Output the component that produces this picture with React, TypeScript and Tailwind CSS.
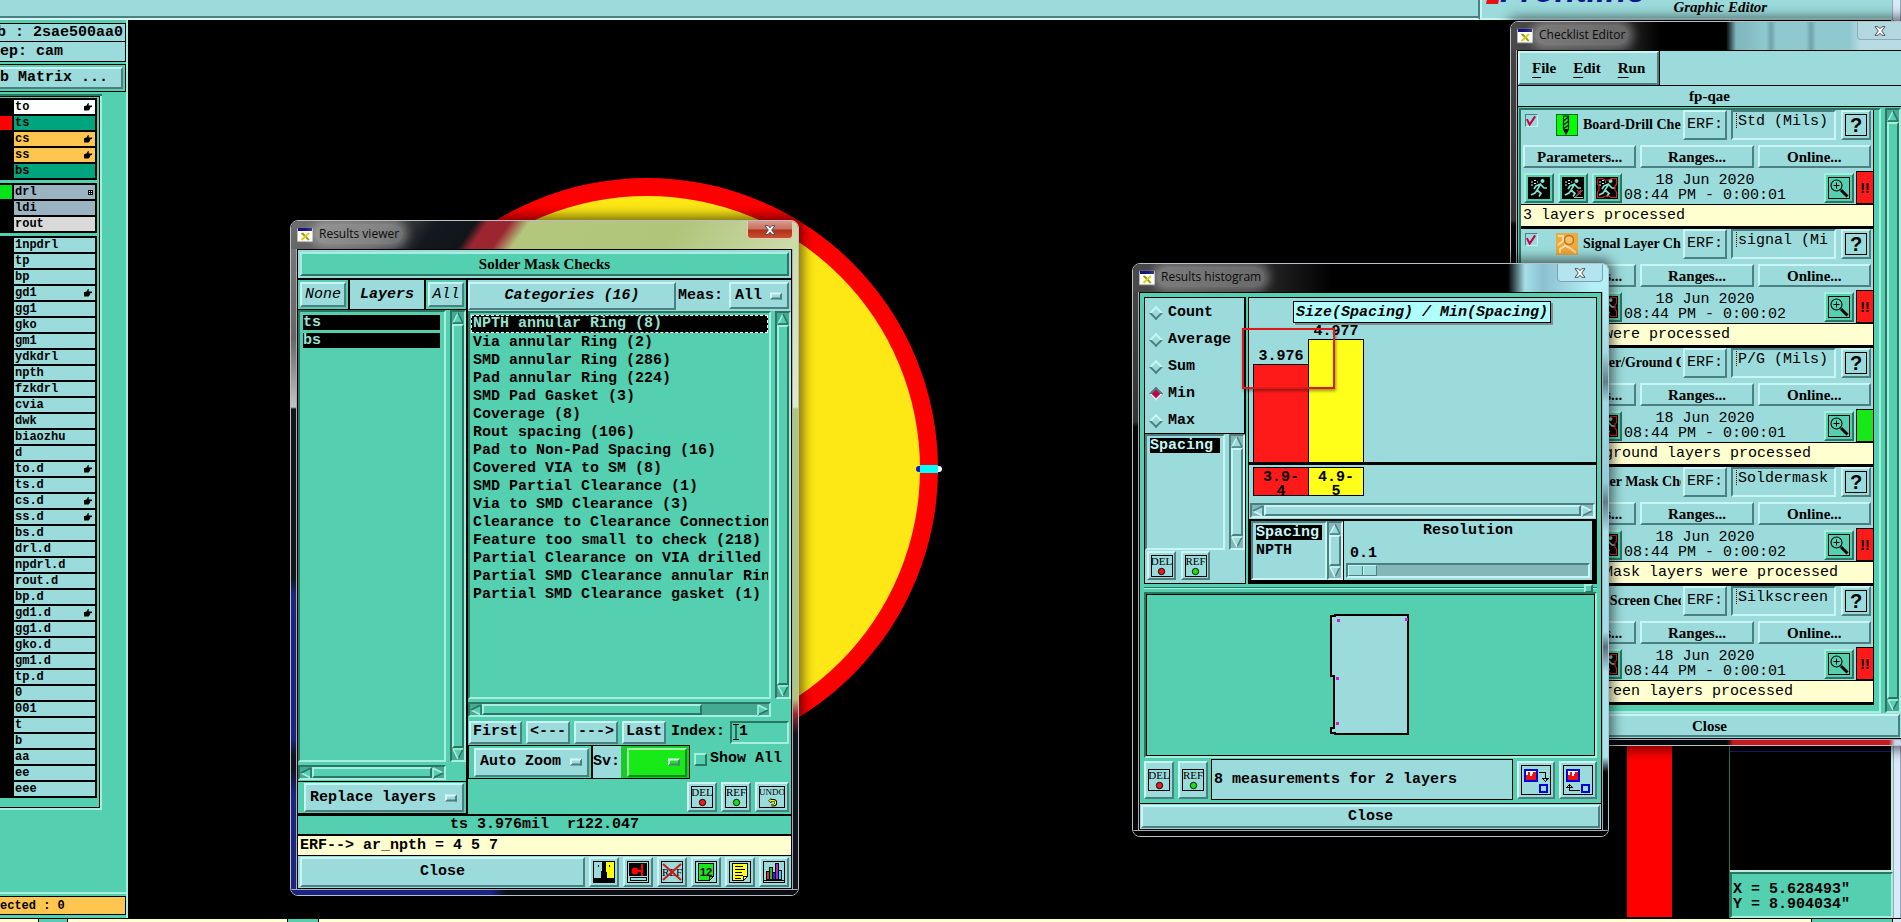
import React from 'react';

const CY = 'bg-[#9bdbdb]';
const TL = 'bg-[#54cfb0]';
const RAISED =
  'border-2 border-t-[#c9f5f4] border-l-[#c9f5f4] border-r-[#4c7f7f] border-b-[#4c7f7f]';
const SUNK =
  'border-2 border-t-[#4c7f7f] border-l-[#4c7f7f] border-r-[#c9f5f4] border-b-[#c9f5f4]';
const RAISED_T =
  'border-2 border-t-[#a6eedd] border-l-[#a6eedd] border-r-[#2b7562] border-b-[#2b7562]';
const SUNK_T =
  'border-2 border-t-[#2b7562] border-l-[#2b7562] border-r-[#a6eedd] border-b-[#a6eedd]';
const SERIF = "font-['Liberation_Serif',serif]";

/* ---------- shared widgets ---------- */

function Arrow({ dir, teal }: { dir: 'up' | 'down' | 'left' | 'right'; teal?: boolean }) {
  const rot = { up: 0, right: 90, down: 180, left: 270 }[dir];
  const light = teal ? '#a6eedd' : '#c9f5f4';
  const dark = teal ? '#2b7562' : '#4c7f7f';
  const lit = dir === 'up' || dir === 'left';
  return (
    <svg width="12" height="12" viewBox="0 0 12 12" className="shrink-0" aria-hidden="true">
      <g transform={`rotate(${rot} 6 6)`}>
        <path d="M6 1 L11 11 L1 11 Z" fill={teal ? '#54cfb0' : '#9bdbdb'} />
        <path d="M6 1 L1 11" stroke={dir === 'down' ? dark : light} strokeWidth="1.6" />
        <path d="M6 1 L11 11" stroke={dir === 'down' ? light : dark} strokeWidth="1.6" />
        <path d="M1 11 L11 11" stroke={lit ? dark : light} strokeWidth="1.6" />
      </g>
    </svg>
  );
}

function VScroll({ teal }: { teal?: boolean }) {
  return (
    <div
      className={`flex w-4 shrink-0 flex-col items-center ${
        teal ? `bg-[#46a991] ${SUNK_T}` : `bg-[#84b8b8] ${SUNK}`
      }`}
    >
      <Arrow dir="up" teal={teal} />
      <div className={`w-full flex-1 ${teal ? `${TL} ${RAISED_T}` : `${CY} ${RAISED}`}`} />
      <Arrow dir="down" teal={teal} />
    </div>
  );
}

function HScroll({ teal, rest = '' }: { teal?: boolean; rest?: string }) {
  return (
    <div
      className={`flex h-[15px] items-center ${
        teal ? `bg-[#46a991] ${SUNK_T}` : `bg-[#84b8b8] ${SUNK}`
      }`}
    >
      <Arrow dir="left" teal={teal} />
      <div className={`h-full flex-1 ${teal ? `${TL} ${RAISED_T}` : `${CY} ${RAISED}`}`} />
      <div className={rest} />
      <Arrow dir="right" teal={teal} />
    </div>
  );
}

function Btn({
  children,
  className = '',
  label,
}: {
  children: React.ReactNode;
  className?: string;
  label?: string;
}) {
  return (
    <button
      type="button"
      aria-label={label}
      className={`flex shrink-0 items-center justify-center whitespace-nowrap ${CY} ${RAISED} ${className}`}
    >
      {children}
    </button>
  );
}

function OptionMenu({
  label,
  value,
  className = '',
  face = `${CY} ${RAISED}`,
  knob = 'bg-[#9bdbdb]',
}: {
  label: string;
  value: string;
  className?: string;
  face?: string;
  knob?: string;
}) {
  return (
    <div className={`relative shrink-0 ${className}`}>
      <select
        aria-label={label}
        defaultValue={value}
        className={`h-full w-full appearance-none rounded-none pl-1 font-bold outline-none ${face}`}
      >
        <option>{value}</option>
      </select>
      <span
        className={`pointer-events-none absolute top-1/2 right-[7px] h-[7px] w-3 -translate-y-1/2 border-2 border-t-[#d6f8f6] border-l-[#d6f8f6] border-r-[#4c7f7f] border-b-[#4c7f7f] ${knob}`}
      />
    </div>
  );
}

function XLogo() {
  return (
    <svg width="16" height="16" viewBox="0 0 16 16" aria-hidden="true">
      <rect x="0" y="1" width="16" height="14" fill="#fff" stroke="#777" />
      <rect x="1" y="1" width="14" height="3" fill="#14147c" />
      <path d="M4.500 6 L11.500 13 M5.500 6 L12 13" stroke="#9a9400" strokeWidth="1.400" />
      <path d="M12 6 L4.500 13" stroke="#d9cf10" strokeWidth="2" />
    </svg>
  );
}

function Win({
  title,
  place,
  titleBg,
  left,
  right,
  bottom,
  closeBg,
  round = 'rounded-lg',
  children,
}: {
  title: string;
  place: string;
  titleBg: string;
  left: string;
  right: string;
  bottom: string;
  closeBg: string;
  round?: string;
  children: React.ReactNode;
}) {
  return (
    <section
      aria-label={title}
      className={`absolute flex flex-col overflow-hidden border border-[#b9bfc6] shadow-[0_0_12px_4px_rgba(0,0,0,0.55)] ${round} ${place}`}
    >
      <header className={`flex h-7 shrink-0 items-start pl-[6px] ${titleBg}`}>
        <span className="mt-[6px]">
          <XLogo />
        </span>
        <h2 className="mt-[3px] ml-[2px] rounded-full bg-white/30 px-1 font-['Open_Sans',sans-serif] text-[12px] leading-5 font-normal text-[#0c0c0c] shadow-[0_0_8px_5px_rgba(255,255,255,0.3)]">
          {title}
        </h2>
        <span className="flex-1" />
        <button
          type="button"
          aria-label={`Close ${title}`}
          className={`mr-[5px] flex h-[18px] w-[46px] items-center justify-center rounded-b-[4px] border border-t-0 ${closeBg}`}
        >
          <svg width="12" height="10" viewBox="0 0 12 10" aria-hidden="true">
            <path
              d="M1 .7h3.200L6 2.800 7.800.7H11L7.700 5 11 9.300H7.800L6 7.200 4.200 9.300H1L4.300 5Z"
              fill="#fff"
              stroke="#4b4f56"
              strokeWidth="1"
            />
          </svg>
        </button>
      </header>
      <div className="flex min-h-0 flex-1">
        <div className={`w-[6px] shrink-0 border-r border-[#aab] ${left}`} />
        <div className="flex min-w-0 flex-1 flex-col border border-black">{children}</div>
        <div className={`w-[6px] shrink-0 border-l border-[#aab] ${right}`} />
      </div>
      <div className={`h-[6px] shrink-0 border-t border-[#aab] ${bottom}`} />
    </section>
  );
}

/* ---------- small icons ---------- */

function TagIcon({ text, color }: { text: string; color?: string }) {
  return (
    <span
      className={`flex h-[22px] flex-col items-center border border-black ${color ? 'w-[22px]' : 'w-[26px]'}`}
    >
      <span
        className={`font-normal ${SERIF} ${
          color ? 'text-[11px] leading-[11px]' : 'text-[9px] leading-[11px]'
        }`}
      >
        {text}
      </span>
      {color ? (
        <svg width="9" height="9" viewBox="0 0 9 9" aria-hidden="true">
          <circle cx="4.500" cy="4.500" r="3.200" fill={color} stroke="#000" strokeWidth=".9" />
        </svg>
      ) : (
        <svg width="11" height="10" viewBox="0 0 11 10" aria-hidden="true">
          <path d="M3 2.500h3.500a2.400 2.400 0 0 1 0 5.500H4.500" fill="none" stroke="#000" strokeWidth="2.800" />
          <path d="M1 3 4 .5v5Z" fill="#ff0" stroke="#000" strokeWidth=".7" />
          <path d="M3 2.700h3.500a2.200 2.200 0 0 1 0 5H5" fill="none" stroke="#ff0" strokeWidth="1.200" />
        </svg>
      )}
    </span>
  );
}

function Icon({ children }: { children: React.ReactNode }) {
  return (
    <svg width="22" height="22" viewBox="0 0 22 22" shapeRendering="crispEdges" aria-hidden="true">
      {children}
    </svg>
  );
}

const Frame = () => <rect x=".5" y=".5" width="21" height="21" fill="none" stroke="#000" />;

function HideIcon() {
  return (
    <Icon>
      <rect width="11" height="22" fill="#9bdbdb" />
      <rect x="11" width="11" height="22" fill="#ff0" />
      <path d="M9 1h4v8l1 3v5h7v4H1v-4h7v-5l1-3Z" fill="#000" />
      <rect x="5" y="4" width="1" height="2" />
      <rect x="16" y="4" width="1" height="2" />
      <Frame />
    </Icon>
  );
}
function TargetIcon() {
  return (
    <Icon>
      <rect x="2" y="2" width="18" height="13" fill="#000" />
      <circle cx="8" cy="10" r="3.500" fill="#f00" shapeRendering="auto" />
      <path d="M11 10h3M15 3v12" stroke="#f00" strokeWidth="2" />
      <path d="M3 16.500h16v3H3Z" fill="#9bdbdb" stroke="#000" />
      <Frame />
    </Icon>
  );
}
function NoRefIcon() {
  return (
    <span className="relative flex h-[22px] w-[22px] items-center justify-center border border-black">
      <span className={`text-[11px] leading-3 font-normal ${SERIF}`}>REF</span>
      <svg className="absolute inset-0" width="20" height="20" viewBox="0 0 20 20" aria-hidden="true">
        <path d="M1 2 19 18M19 2 1 18" stroke="#d01818" strokeWidth="2" />
      </svg>
    </span>
  );
}
function PageIcon({ fill, lines }: { fill: string; lines?: boolean }) {
  return (
    <span className="relative flex h-[22px] w-[22px] items-center justify-center">
      <span className="absolute inset-0">
        <Icon>
          <path d="M3.500 2.500h15v13l-4 4h-11Z" fill={fill} stroke="#000" />
          <path d="M14.500 19.500v-4h4" fill="none" stroke="#000" />
          {lines && <path d="M6 5.500h8M6 8.500h10M6 11.500h7M6 14.500h8M6 17h6" stroke="#000" />}
          <Frame />
        </Icon>
      </span>
      {!lines && <span className="relative font-['Liberation_Sans',sans-serif] text-[11px] leading-3 font-bold">12</span>}
    </span>
  );
}
function ChartIcon() {
  return (
    <Icon>
      <path d="M1 19.500h20" stroke="#000" />
      <rect x="3.500" y="10.500" width="3" height="8" fill="#f22" stroke="#000" />
      <rect x="6.500" y="6.500" width="3" height="12" fill="#2b2" stroke="#000" />
      <rect x="9.500" y="11.500" width="3" height="7" fill="#22f" stroke="#000" />
      <rect x="12.500" y="2.500" width="3" height="16" fill="#b2b" stroke="#000" />
      <rect x="15.500" y="9.500" width="3" height="9" fill="#2df" stroke="#000" />
      <Frame />
    </Icon>
  );
}
function SwapIcon({ up }: { up?: boolean }) {
  return (
    <svg width="30" height="30" viewBox="0 0 30 30" shapeRendering="crispEdges" aria-hidden="true">
      <rect x=".5" y=".5" width="29" height="29" fill="none" stroke="#000" />
      <rect x="4" y="5" width="12" height="11" fill="#fff" stroke="#00d" strokeWidth="2" />
      <path d="M5 15V10h2V7h2v4h2V9h1V7h3v8Z" fill="#e11" />
      <rect x="19" y="20" width="7" height="7" fill="none" stroke="#00d" strokeWidth="2" />
      {up ? (
        <path d="M17 25.500H6.500V20M4 22.500l2.500-3 2.500 3Z" fill="none" stroke="#000" />
      ) : (
        <path d="M18 7.500h6.500V14M22 13.500l2.500 3 2.500-3Z" fill="none" stroke="#000" />
      )}
    </svg>
  );
}
function RunIcon({ kind }: { kind: number }) {
  return (
    <svg width="22" height="22" viewBox="0 0 22 22" aria-hidden="true">
      <rect width="22" height="22" fill="#000" />
      <circle cx="14.500" cy="4" r="2" fill="#7fe3cd" />
      <path
        d="M13 6.500 9 13l4 3.500-2 3M9.500 12.500 7 16l-4 2M12.500 7 8 9l-2 3M13 8l3 3h3"
        fill="none"
        stroke="#7fe3cd"
        strokeWidth="1.700"
      />
      <path d="M3 5h2M6 3.500h2M3 8h2M6 6.500h2M9 5h1" stroke="#bff" strokeWidth="1" />
      {kind === 1 && (
        <>
          <path d="M13 20.500 20.500 13M12 20.500h9" stroke="#9dd" strokeWidth=".9" />
          <path d="m15 13 4 5m0-5-4 5" stroke="#d22" strokeWidth="1.200" />
        </>
      )}
      {kind === 2 && (
        <path
          d="M2 1.500h5l2 1.500h4l2-1.500h5.500v6L19 9v4l1.500 2v5.500H15L13 19H9l-2 1.500H1.500V15L3 13V9L1.500 7Z"
          fill="none"
          stroke="#e01c1c"
          strokeWidth="1.200"
        />
      )}
    </svg>
  );
}
function ZoomIcon() {
  return (
    <svg width="22" height="22" viewBox="0 0 22 22" aria-hidden="true">
      <rect x=".5" y=".5" width="21" height="21" fill="#54cfb0" stroke="#000" />
      <circle cx="8.500" cy="8.500" r="5.500" fill="none" stroke="#000" strokeWidth="1.100" />
      <path d="M5.500 8.500h6M8.500 5.500v6" stroke="#000" />
      <path d="m13 13 6.500 6.500" stroke="#000" strokeWidth="3" />
    </svg>
  );
}
function DrillIcon() {
  return (
    <svg width="22" height="22" viewBox="0 0 22 22" aria-hidden="true">
      <rect x=".5" y=".5" width="21" height="21" fill="#0f0" stroke="#062" />
      <path d="M7.500 2h5v13l-2.500 5-2.500-5ZM7.500 7l5-4M7.500 11l5-4M7.500 15l5-4" fill="none" stroke="#000" strokeWidth="1.200" />
      <path d="M8 15h4l-2 5Z" />
    </svg>
  );
}
function SignalIcon() {
  return (
    <svg width="22" height="22" viewBox="0 0 22 22" aria-hidden="true">
      <rect width="22" height="22" fill="#f0a93c" />
      <circle cx="13" cy="7" r="4.500" fill="#f7c069" stroke="#b87816" strokeWidth="1.500" />
      <path d="M2 3h5v5L2 12M8 12l6 3 6 5M4 20v-4l5-3" fill="none" stroke="#f9dca0" strokeWidth="2" />
    </svg>
  );
}
function Hand() {
  return (
    <svg width="9" height="8" viewBox="0 0 9 8" aria-hidden="true">
      <path d="M0 3.500 3 2.500 4.500 0 5.500.6 5 2.500H8.500V4L6.500 4.500V6L5 7.500H1L0 7Z" transform="translate(-.5)" />
    </svg>
  );
}

/* ---------- layer list ---------- */

type Layer = { name: string; bg?: string; mark?: 'hand' | 'grid'; swatch?: string };
const G1: Layer[] = [
  { name: 'to', bg: 'bg-white', mark: 'hand' },
  { name: 'ts', bg: 'bg-[#00a57e]', swatch: 'bg-[#ff0000]' },
  { name: 'cs', bg: 'bg-[#ffc64f]', mark: 'hand' },
  { name: 'ss', bg: 'bg-[#ffc64f]', mark: 'hand' },
  { name: 'bs', bg: 'bg-[#00a57e]' },
];
const G2: Layer[] = [
  { name: 'drl', bg: 'bg-[#9ab5c1]', mark: 'grid', swatch: 'bg-[#00e51a]' },
  { name: 'ldi', bg: 'bg-[#9ab5c1]' },
  { name: 'rout', bg: 'bg-[#d9d9d9]' },
];
const HANDS = ['gd1', 'to.d', 'cs.d', 'ss.d', 'gd1.d'];
const G3: Layer[] = (
  '1npdrl tp bp gd1 gg1 gko gm1 ydkdrl npth fzkdrl cvia dwk biaozhu d to.d ts.d cs.d ss.d bs.d drl.d npdrl.d ' +
  'rout.d bp.d gd1.d gg1.d gko.d gm1.d tp.d 0 001 t b aa ee eee'
)
  .split(' ')
  .map((name) => ({ name, mark: HANDS.includes(name) ? ('hand' as const) : undefined }));

function LayerGroup({ rows }: { rows: Layer[] }) {
  return (
    <ul className="flex flex-col gap-[2px] bg-black py-[2px] pr-[2px]">
      {rows.map((r) => (
        <li key={r.name} className="flex h-[14px] gap-[2px]">
          <span className={`w-3 ${r.swatch ?? 'bg-black'}`} />
          <span
            className={`flex flex-1 items-center justify-between pr-[2px] pl-[1px] text-[12px] leading-[14px] ${
              r.bg ?? CY
            }`}
          >
            {r.name}
            {r.mark === 'hand' && <Hand />}
            {r.mark === 'grid' && (
              <svg width="5" height="5" viewBox="0 0 5 5" shapeRendering="crispEdges" aria-hidden="true">
                <rect width="5" height="5" />
                <path d="M1 1h1v1H1ZM3 1h1v1H3ZM1 3h1v1H1ZM3 3h1v1H3Z" fill="#fff" />
              </svg>
            )}
          </span>
        </li>
      ))}
    </ul>
  );
}

function Sidebar() {
  return (
    <aside className={`flex w-32 shrink-0 flex-col overflow-hidden border-r-2 border-[#a6eedd] pt-[3px] ${TL}`}>
      <div className="border border-l-0 border-black">
        <div className={`flex h-[18px] items-center justify-end border-b border-black pr-[2px] leading-[18px] whitespace-pre ${CY}`}>
          b : 2sae500aa0
        </div>
        <div className={`flex h-[19px] items-center leading-[19px] ${CY}`}>ep: cam</div>
      </div>
      <div className="mt-[2px] border border-l-0 border-black py-[2px] pr-[2px]">
        <Btn className="h-[22px] w-full justify-start border-l-0">b Matrix ...</Btn>
      </div>
      <div className="mt-[2px] mr-6 h-[2px] bg-[#2b7562]" />
      <div className="mr-6 border-r-2 border-b-2 border-[#a6eedd]">
        <div className="flex flex-col gap-[3px] border-t border-r border-b border-black pt-[1px] pr-[2px] pb-[9px]">
          <LayerGroup rows={G1} />
          <LayerGroup rows={G2} />
          <LayerGroup rows={G3} />
        </div>
      </div>
      <div className="flex-1" />
      <div className="border-t-2 border-[#a6eedd] pt-[2px] pb-[3px]">
        <div className="flex h-[19px] items-center border border-l-0 border-black bg-[#ffc64f] text-[12px]">
          ected : 0
        </div>
      </div>
    </aside>
  );
}

/* ---------- results viewer ---------- */

const CATS = [
  'NPTH annular Ring (8)',
  'Via annular Ring (2)',
  'SMD annular Ring (286)',
  'Pad annular Ring (224)',
  'SMD Pad Gasket (3)',
  'Coverage (8)',
  'Rout spacing (106)',
  'Pad to Non-Pad Spacing (16)',
  'Covered VIA to SM (8)',
  'SMD Partial Clearance (1)',
  'Via to SMD Clearance (3)',
  'Clearance to Clearance Connection (2)',
  'Feature too small to check (218)',
  'Partial Clearance on VIA drilled (4)',
  'Partial SMD Clearance annular Ring (1)',
  'Partial SMD Clearance gasket (1)',
];

function ResultsViewer() {
  return (
    <Win
      title="Results viewer"
      place="left-[290px] top-[220px] h-[676px] w-[509px]"
      titleBg="bg-[linear-gradient(125deg,#6e6e6e_0px,#4e4e4e_80px,#14191f_120px,#10151a_152px,#9c2630_162px,#9c2630_180px,#b2c67c_196px,#b0c47a_320px,#cddcac_430px)]"
      left="bg-[linear-gradient(#777,#666_90px,#c4c4c4_158px,#12161c_160px,#12161c_330px,#1a2482_345px,#1a2482_490px,#101420_505px,#101420_520px,#1a2482_545px)]"
      right="bg-[linear-gradient(#cddcac,#dfe8cc_158px,#b0c47a_160px,#b0c47a_450px,#9c2630_465px,#12161c_485px)]"
      bottom="bg-[linear-gradient(90deg,#1a2482_200px,#0c0e14_215px)]"
      closeBg="border-[#f0c4b4] bg-[linear-gradient(#dc9a88,#c87060_48%,#b03018_52%,#c85030)]"
    >
      <div className={`flex h-[30px] shrink-0 border-b-2 border-black p-[2px] ${CY}`}>
        <div className={`flex flex-1 items-center justify-center text-[15px] ${SERIF} ${TL} ${RAISED_T}`}>
          Solder Mask Checks
        </div>
      </div>
      <div className="flex min-h-0 flex-1">
        <div className={`flex w-[170px] shrink-0 flex-col border-r-2 border-black ${TL}`}>
          <div className="flex h-[30px] shrink-0 border-b border-black">
            <div className="p-[2px]">
              <Btn className="h-[25px] w-[46px] font-normal italic">None</Btn>
            </div>
            <div className={`flex flex-1 items-center justify-center border-x-2 border-black italic ${CY}`}>Layers</div>
            <div className="p-[2px]">
              <Btn className="h-[25px] w-9 font-normal italic">All</Btn>
            </div>
          </div>
          <div className="flex min-h-0 flex-1 gap-1">
            <ul className={`flex flex-1 flex-col gap-[3px] pt-[3px] pr-1 pl-[3px] ${SUNK_T}`}>
              {['ts', 'bs'].map((l) => (
                <li key={l} className="h-[15px] bg-black leading-[15px] text-[#9be0d0]">
                  {l}
                </li>
              ))}
            </ul>
            <VScroll teal />
          </div>
          <div className="mt-[3px] mr-5">
            <HScroll teal />
          </div>
          <div className="mt-px border-y border-black py-[1px] pr-[2px] pl-[6px]">
            <OptionMenu label="Layer mode" value="Replace layers" className="h-[29px] w-full" />
          </div>
        </div>
        <div className={`flex min-w-0 flex-1 flex-col ${TL}`}>
          <div className={`flex h-[31px] shrink-0 items-center gap-[2px] ${CY}`}>
            <Btn className="h-[28px] flex-1 italic">Categories (16)</Btn>
            <span className="pr-1">Meas:</span>
            <OptionMenu label="Measurement" value="All" className="mr-[2px] h-[27px] w-[60px]" />
          </div>
          <div className="flex min-h-0 flex-1 gap-1">
            <ul className={`flex-1 overflow-hidden pt-[2px] pr-[1px] pl-[1px] ${SUNK_T}`}>
              {CATS.map((c, i) => (
                <li
                  key={c}
                  className={
                    i === 0
                      ? 'mb-px h-[18px] border border-dashed border-white bg-black pl-px leading-4 text-[#9be0d0]'
                      : 'h-[18px] overflow-hidden pl-[2px] leading-[18px] whitespace-nowrap'
                  }
                >
                  {c}
                </li>
              ))}
            </ul>
            <VScroll teal />
          </div>
          <div className="mt-[3px] mr-5">
            <HScroll teal rest="w-[55px]" />
          </div>
          <div className="mt-[3px] flex h-6 shrink-0 items-center gap-1 pr-[2px] pl-[1px]">
            <Btn className="h-[23px] w-[53px]">First</Btn>
            <Btn className="h-[23px] w-11">&lt;---</Btn>
            <Btn className="h-[23px] w-11">---&gt;</Btn>
            <Btn className="h-[23px] w-11">Last</Btn>
            <label htmlFor="idx" className="flex-1 pl-px">
              Index:
            </label>
            <span className={`flex h-[23px] w-[59px] items-center ${SUNK_T}`}>
              <svg width="6" height="16" viewBox="0 0 6 16" className="ml-px" aria-hidden="true">
                <path d="M0 .5h6M0 15.500h6M3 0v16" stroke="#000" />
              </svg>
              <input id="idx" defaultValue="1" className="w-10 bg-transparent leading-4 font-bold outline-none" />
            </span>
          </div>
          <div className="mt-px flex h-[34px] shrink-0 items-start">
            <div className={`flex h-[34px] items-center border border-black ${TL}`}>
              <OptionMenu label="Zoom mode" value="Auto Zoom" className="mx-[2px] ml-[5px] h-[29px] w-[115px]" />
              <span className={`flex h-full items-center border-l-2 border-black pr-[1px] ${CY}`}>Sv:</span>
              <span className="flex h-full items-center bg-[#1cc92c] pr-[2px] pl-[6px]">
                <OptionMenu
                  label="Severity"
                  value=" "
                  className="h-[29px] w-[60px]"
                  face="border-2 border-t-[#a0f8a0] border-l-[#a0f8a0] border-r-[#148a20] border-b-[#148a20] bg-[#18ea18]"
                  knob="bg-[#18ea18]"
                />
              </span>
            </div>
            <label className="mt-[6px] ml-1 flex items-center gap-[3px]">
              <input type="checkbox" className={`h-[13px] w-[13px] appearance-none ${TL} ${RAISED_T}`} />
              <span className="leading-4">Show All</span>
            </label>
          </div>
          <div className="flex h-[35px] shrink-0 items-center justify-end gap-1 pr-[2px]">
            <Btn className="h-[30px] w-[30px]">
              <TagIcon text="DEL" color="#f01818" />
            </Btn>
            <Btn className="h-[30px] w-[30px]">
              <TagIcon text="REF" color="#18e018" />
            </Btn>
            <Btn className="h-[30px] w-[34px]">
              <TagIcon text="UNDO" />
            </Btn>
          </div>
        </div>
      </div>
      <div
        className={`flex h-[22px] shrink-0 items-center justify-center border-y-2 border-black whitespace-pre ${TL}`}
      >
        {'ts 3.976mil  r122.047'}
      </div>
      <div className="flex h-5 shrink-0 items-center border-b border-black bg-[#ffffcf] pl-[2px]">
        ERF--&gt; ar_npth = 4 5 7
      </div>
      <div className={`flex h-8 shrink-0 items-center gap-1 px-[2px] ${CY}`}>
        <Btn className="h-[30px] flex-1">Close</Btn>
        {[
          <HideIcon key="a" />,
          <TargetIcon key="b" />,
          <NoRefIcon key="c" />,
          <PageIcon key="d" fill="#18e818" />,
          <PageIcon key="e" fill="#ffff20" lines />,
          <ChartIcon key="f" />,
        ].map((ic, i) => (
          <Btn key={i} label={`Tool ${i + 1}`} className="h-[30px] w-[30px]">
            {ic}
          </Btn>
        ))}
      </div>
    </Win>
  );
}

/* ---------- histogram ---------- */

function Histogram() {
  return (
    <Win
      title="Results histogram"
      place="left-[1132px] top-[263px] h-[574px] w-[477px]"
      titleBg="bg-[linear-gradient(90deg,#4a4a4a_0px,#2c2c2c_120px,#000_200px,#000_375px,#a5dfe9_392px,#8cc0d0_410px,#b5f0f6_460px)]"
      left="bg-[linear-gradient(#444,#333_130px,#050505_135px)]"
      right="bg-[linear-gradient(#b5f0f6,#9adcec_60px,#5b7f8c_90px,#9adcec_110px,#8ad0e0_190px,#5b7f8c_210px,#a5e5f0_240px,#9adcec_340px,#5b6f7c_355px,#a5e5f0_380px,#a5e5f0_465px,#05080a_480px)]"
      bottom="bg-black"
      closeBg="border-[#7fa0b4] bg-[#b4e4ee]"
    >
      <div className={`flex min-h-0 flex-1 flex-col px-1 pt-1 ${TL}`}>
        <div className="flex h-[287px] shrink-0 gap-[2px]">
          <div className={`flex w-[102px] shrink-0 flex-col border border-black ${CY}`}>
            <fieldset className="flex h-[136px] flex-col border-r border-b border-black pt-px pl-[6px]">
              {['Count', 'Average', 'Sum', 'Min', 'Max'].map((r) => (
                <label key={r} className="flex h-[27px] shrink-0 items-center gap-[7px]">
                  <input
                    type="radio"
                    name="stat"
                    defaultChecked={r === 'Min'}
                    className="h-[10px] w-[10px] rotate-45 appearance-none border-2 border-t-[#c9f5f4] border-r-[#4c7f7f] border-b-[#4c7f7f] border-l-[#c9f5f4] checked:border-t-[#4c7f7f] checked:border-r-[#c9f5f4] checked:border-b-[#c9f5f4] checked:border-l-[#4c7f7f] checked:bg-[#c80048]"
                  />
                  {r}
                </label>
              ))}
            </fieldset>
            <div className="flex h-[116px] gap-1">
              <ul className={`flex-1 px-[3px] pt-[2px] ${SUNK}`}>
                <li className="h-[15px] bg-black leading-[15px] text-[#c9f5f4]">Spacing</li>
              </ul>
              <VScroll />
            </div>
            <div className="flex items-center gap-[5px] pt-px pl-[2px]">
              <Btn className="h-[29px] w-[29px]">
                <TagIcon text="DEL" color="#f01818" />
              </Btn>
              <Btn className="h-[29px] w-[29px]">
                <TagIcon text="REF" color="#18e018" />
              </Btn>
            </div>
          </div>
          <div className={`flex min-w-0 flex-1 flex-col border border-black ${CY}`}>
            <div className="flex h-[167px] flex-col border-b-[3px] border-black">
              <div className="mt-[3px] ml-[44px] flex h-[22px] w-[258px] items-center justify-center border border-black bg-[#b0ffff] pt-px whitespace-nowrap italic shadow-[2px_2px_0_#7d8f8f]">
                Size(Spacing) / Min(Spacing)
              </div>
              <div className="flex flex-1 items-end pl-1">
                <div className="flex w-[56px] flex-col items-center">
                  <span className="h-[14px] leading-[14px]">3.976</span>
                  <div className="h-[98px] w-[56px] border border-b-0 border-black bg-[#ff1a1a]" />
                </div>
                <div className="-ml-px flex w-[56px] flex-col items-center">
                  <span className="h-[14px] leading-[14px]">4.977</span>
                  <div className="h-[123px] w-[56px] border border-b-0 border-black bg-[#ffff1a]" />
                </div>
              </div>
            </div>
            <div className="mt-[2px] flex h-[29px] pl-1 text-center leading-[14px]">
              <div className="w-[56px] border border-black bg-[#ff1a1a] pt-[3px]">
                3.9-
                <br />4
              </div>
              <div className="-ml-px w-[56px] border border-black bg-[#ffff1a] pt-[3px]">
                4.9-
                <br />5
              </div>
            </div>
            <div className="mt-[7px] px-px">
              <HScroll />
            </div>
            <div className="mt-px flex h-16 border-2 border-r-4 border-b-[3px] border-black">
              <ul className={`w-[76px] overflow-hidden px-[3px] pt-[2px] ${SUNK}`}>
                <li className="mb-[3px] h-[15px] overflow-hidden bg-black leading-[15px] text-[#c9f5f4]">Spacing</li>
                <li className="h-[15px] leading-[15px]">NPTH</li>
              </ul>
              <VScroll />
              <div className="flex flex-1 flex-col border-l border-black px-[2px]">
                <label htmlFor="res" className="h-5 text-center">
                  Resolution
                </label>
                <output className="h-[22px] pl-1 leading-[26px]">0.1</output>
                <input
                  id="res"
                  type="range"
                  min="0.1"
                  max="10"
                  step="0.1"
                  defaultValue="0.1"
                  className={`h-[15px] w-full appearance-none bg-[#84b8b8] ${SUNK} [&::-webkit-slider-thumb]:h-[11px] [&::-webkit-slider-thumb]:w-[29px] [&::-webkit-slider-thumb]:appearance-none [&::-webkit-slider-thumb]:border [&::-webkit-slider-thumb]:border-t-[#c9f5f4] [&::-webkit-slider-thumb]:border-r-[#4c7f7f] [&::-webkit-slider-thumb]:border-b-[#4c7f7f] [&::-webkit-slider-thumb]:border-l-[#c9f5f4] [&::-webkit-slider-thumb]:bg-[linear-gradient(90deg,#9bdbdb_13px,#4c7f7f_13px,#4c7f7f_14px,#c9f5f4_14px,#c9f5f4_15px,#9bdbdb_15px)]`}
                />
              </div>
            </div>
          </div>
        </div>
        <div className="flex h-2 shrink-0 items-center justify-end">
          <div className="h-[2px] flex-1 border-t border-[#2b7562] bg-[#a6eedd]" />
          <div className={`h-[9px] w-[9px] ${TL} ${RAISED_T}`} />
          <div className="h-[2px] w-1 border-t border-[#2b7562] bg-[#a6eedd]" />
        </div>
        <div className={`flex min-h-0 flex-1 ${SUNK_T}`}>
          <div className="flex flex-1 items-center justify-center border border-black">
            <svg width="84" height="124" viewBox="0 0 84 124" shapeRendering="crispEdges" aria-hidden="true">
              <path
                d="M6 2H79V121H6V120H2V115H5V63H2V3H6Z"
                fill="#9bdbdb"
                stroke="#000"
                strokeWidth="2"
              />
              <g fill="#d21ad2">
                <rect x="8" y="6" width="3" height="3" />
                <rect x="7" y="64" width="3" height="3" />
                <rect x="7" y="109" width="3" height="3" />
                <rect x="76" y="5" width="3" height="3" />
              </g>
            </svg>
          </div>
        </div>
        <div className="flex h-[45px] shrink-0 items-start gap-1 pt-px">
          <Btn className="mt-[2px] h-[38px] w-[30px]">
            <TagIcon text="DEL" color="#f01818" />
          </Btn>
          <Btn className="mt-[2px] h-[38px] w-[30px]">
            <TagIcon text="REF" color="#18e018" />
          </Btn>
          <div className={`-ml-px flex h-[41px] min-w-0 flex-1 items-center border border-black pl-[2px] ${CY}`}>
            8 measurements for 2 layers
          </div>
          <Btn label="Copy down" className="mt-[2px] h-[38px] w-[38px]">
            <SwapIcon />
          </Btn>
          <Btn label="Copy up" className="mt-[2px] h-[38px] w-[38px]">
            <SwapIcon up />
          </Btn>
        </div>
      </div>
      <div className={`flex h-[26px] shrink-0 border-t border-black p-px ${CY}`}>
        <Btn className="h-[23px] flex-1">Close</Btn>
      </div>
    </Win>
  );
}

/* ---------- checklist ---------- */

const CHECKS = [
  { name: 'Board-Drill Checks', erf: 'Std (Mils)', t: '0:00:01', msg: '3 layers processed', bad: true, icon: <DrillIcon /> },
  { name: 'Signal Layer Checks', erf: 'signal (Mi', t: '0:00:02', msg: '2 layers were processed', bad: true, icon: <SignalIcon /> },
  { name: 'Power/Ground Checks', erf: 'P/G (Mils)', t: '0:00:01', msg: '10 power/ground layers processed', bad: false, icon: <SignalIcon /> },
  { name: 'Solder Mask Checks', erf: 'Soldermask', t: '0:00:02', msg: '2 Solder Mask layers were processed', bad: true, icon: <SignalIcon /> },
  { name: 'Silk Screen Checks', erf: 'Silkscreen', t: '0:00:01', msg: '2 Silk Screen layers processed', bad: true, icon: <SignalIcon /> },
];

function Checklist() {
  return (
    <Win
      title="Checklist Editor"
      place="left-[1510px] right-[-8px] top-[21px] h-[725px]"
      round="rounded-tl-lg"
      titleBg="bg-[linear-gradient(90deg,#4a4a4a_0px,#2c2c2c_110px,#000_150px,#000_215px,#7fb5bd_225px,#8fc8cf_255px,#6fa3ab_260px,#8fc8cf_265px,#8fc8cf_295px,#6fa3ab_300px,#8fc8cf_305px,#8fc8cf_338px,#b9dbe4_350px)]"
      left="bg-[linear-gradient(#444,#333_170px,#050505_175px)]"
      right="bg-[#c5d8ea]"
      bottom="bg-[linear-gradient(90deg,#05080a_216px,#c81820_222px,#c81820_378px,#c5d8ea_384px)]"
      closeBg="border-[#8fa9b8] bg-[#b4d8e0]"
    >
      <div className={`flex h-[35px] shrink-0 border-b border-black ${CY}`}>
        <nav className={`border-r border-black ${SERIF} text-[15px]`}>
          <div className={`flex h-full items-center gap-[17px] pr-3 pl-3 ${RAISED}`}>
            {['File', 'Edit', 'Run'].map((m) => (
              <a key={m} href="#" className="leading-5">
                <span className="underline underline-offset-4">{m[0]}</span>
                {m.slice(1)}
              </a>
            ))}
          </div>
        </nav>
      </div>
      <h3 className={`flex h-[21px] shrink-0 items-center justify-center border-b border-black text-[15px] ${SERIF} ${CY}`}>
        fp-qae
      </h3>
      <div className={`flex min-h-0 flex-1 gap-1 pt-px pl-px ${TL}`}>
        <div className={`flex-1 overflow-hidden pr-[5px] ${SUNK_T}`}>
          {CHECKS.map((c) => (
            <article key={c.name} className={`flex h-[119px] flex-col border-r border-b-[3px] border-black ${CY}`}>
              <div className="flex h-[34px] items-start pr-[2px] pl-1">
                <label className="flex items-start">
                  <input type="checkbox" defaultChecked className="peer sr-only" aria-label={c.name} />
                  <span className="mt-1 flex h-[13px] w-[13px] border border-t-[#4c7f7f] border-r-[#c9f5f4] border-b-[#c9f5f4] border-l-[#4c7f7f]">
                    <svg width="12" height="11" viewBox="0 0 12 11" aria-hidden="true">
                      <path d="m1 4 3 6 6-9" fill="none" stroke="#c80048" strokeWidth="2.200" />
                    </svg>
                  </span>
                </label>
                <span className="mt-1 ml-[18px] shrink-0">{c.icon}</span>
                <h4
                  className={`ml-[5px] flex-1 overflow-hidden text-[14px] leading-[30px] whitespace-nowrap ${SERIF}`}
                >
                  {c.name}
                </h4>
                <Btn className="ml-[2px] h-[30px] w-11 font-normal">ERF:</Btn>
                <span className={`ml-1 flex h-[30px] w-[105px] shrink-0 items-start pl-[3px] ${SUNK}`}>
                  <svg width="2" height="15" viewBox="0 0 2 15" className="mt-px shrink-0" aria-hidden="true">
                    <path d="M.5 0v15" stroke="#000" strokeDasharray="1 1" />
                  </svg>
                  <input
                    aria-label={`${c.name} ERF`}
                    defaultValue={c.erf}
                    className="h-[18px] w-[92px] bg-transparent leading-4 font-normal outline-none"
                  />
                </span>
                <Btn label="Help" className="ml-[5px] h-[30px] w-[30px]">
                  <span className="flex h-[22px] w-[22px] items-center justify-center border border-black font-['Liberation_Sans',sans-serif] text-[20px] leading-5">
                    ?
                  </span>
                </Btn>
              </div>
              <div className={`flex gap-1 pt-px pr-[2px] pl-[2px] text-[15px] ${SERIF}`}>
                <Btn className="h-[23px] flex-1">Parameters...</Btn>
                <Btn className="h-[23px] flex-1">Ranges...</Btn>
                <Btn className="h-[23px] flex-1">Online...</Btn>
              </div>
              <div className="mt-[3px] flex h-[33px] items-center pl-[3px]">
                <div className="flex gap-1">
                  {[0, 1, 2].map((k) => (
                    <button
                      type="button"
                      key={k}
                      aria-label={`Run mode ${k + 1}`}
                      className={`flex h-[30px] w-[30px] items-center justify-center ${TL} ${RAISED_T}`}
                    >
                      <RunIcon kind={k} />
                    </button>
                  ))}
                </div>
                <p className="ml-[2px] text-center leading-[15px] font-normal whitespace-nowrap">
                  18 Jun 2020
                  <br />
                  08:44 PM - {c.t}
                </p>
                <span className="flex-1" />
                <button
                  type="button"
                  aria-label="Zoom"
                  className={`flex h-[30px] w-[30px] items-center justify-center ${TL} ${RAISED_T}`}
                >
                  <ZoomIcon />
                </button>
                <span
                  className={`ml-[2px] flex h-full w-[17px] items-center justify-center border border-r-0 border-black font-['Liberation_Sans',sans-serif] text-[14px] ${
                    c.bad ? 'bg-[#ff1a1a]' : 'bg-[#18e818]'
                  }`}
                >
                  {c.bad && '!!'}
                </span>
              </div>
              <div className="flex flex-1 items-center border-t border-black bg-[#ffffcf] pl-[2px] font-normal whitespace-nowrap">
                {c.msg}
              </div>
            </article>
          ))}
        </div>
        <VScroll teal />
      </div>
      <div className={`flex h-[25px] shrink-0 p-px ${CY}`}>
        <Btn className={`h-[23px] flex-1 text-[15px] ${SERIF}`}>Close</Btn>
      </div>
    </Win>
  );
}

/* ---------- desktop ---------- */

export default function App() {
  return (
    <div className="relative flex h-screen w-full flex-col overflow-hidden bg-black font-['Liberation_Mono',monospace] text-[15px] leading-5 font-bold text-black">
      <div className="flex h-5 shrink-0">
        <div className="flex-1 border-r-2 border-b-2 border-r-[#4c7f7f] border-b-[#d8f6f2]">
          <div className={`h-[18px] border-b-2 border-[#4c7f7f] ${CY}`} />
        </div>
        <div className={`flex w-[412px] items-start gap-7 overflow-hidden border-b-2 border-l-2 border-[#c9f5f4] pl-1 ${CY}`}>
          <span className="-mt-[26px] flex items-end font-['Liberation_Sans',sans-serif] text-[34px] leading-8 text-[#14148c] italic">
            <svg width="14" height="30" viewBox="0 0 14 30" aria-hidden="true">
              <path d="M4 10H16L12 28H0Z" fill="#e81010" />
            </svg>
            Frontline
          </span>
          <span className={`text-[15px] leading-[14px] italic ${SERIF}`}>Graphic Editor</span>
        </div>
        <div className="w-[9px] border-x border-[#8fa9c8] bg-[#dbe8f6]" />
      </div>

      <div className="flex min-h-0 flex-1">
        <Sidebar />
        <main className="relative min-w-0 flex-1 overflow-hidden">
          <svg className="absolute top-0 left-0" width="1600" height="900" viewBox="128 20 1600 900" aria-hidden="true">
            <circle cx="647" cy="469" r="291" fill="#f00" />
            <circle cx="647" cy="469" r="273" fill="#fde715" />
            <path d="M920 466h-1a3 3 0 0 0 0 6h1Z" fill="#1010d0" />
            <rect x="920" y="465" width="18" height="8" fill="#0ff" />
            <path d="M938 466h1a3 3 0 0 1 0 6h-1Z" fill="#fff" />
            <rect x="1627" y="700" width="45" height="217" fill="#f00" />
          </svg>
        </main>
        <aside className="flex w-[164px] shrink-0 flex-col border-l border-[#2b7562]">
          <div className="flex flex-1 flex-col justify-end border-r-2 border-b-2 border-[#c0eade]">
            <div className="h-[119px] border-t border-[#1a1a8c]" />
          </div>
          <p className={`h-[46px] pt-[8px] pl-[1px] leading-[15px] whitespace-pre ${SUNK_T} ${TL}`}>
            {'X = 5.628493"\nY = 8.904034"'}
          </p>
        </aside>
        <div className="w-2 shrink-0 border-x border-[#8fa9c8] bg-[#dbe8f6]" />
      </div>

      <footer className="flex h-[4px] shrink-0 gap-px border-t border-black bg-black">
        <span className="w-[38px] bg-[#ffffcf]" />
        <span className={`w-[28px] ${TL}`} />
        <span className="w-[219px] bg-[#ffffcf]" />
        <span className={`w-[30px] ${TL}`} />
        <span className="flex-1 bg-[#ffffcf]" />
        <span className={`w-[80px] ${TL}`} />
        <span className="w-2 bg-[#dbe8f6]" />
      </footer>

      <ResultsViewer />
      <Checklist />
      <Histogram />
      <div className="pointer-events-none absolute top-[328px] left-[1242px] h-[61px] w-[93px] border-2 border-[#e01818] shadow-[1px_2px_3px_rgba(0,0,0,0.4)]" />
    </div>
  );
}
